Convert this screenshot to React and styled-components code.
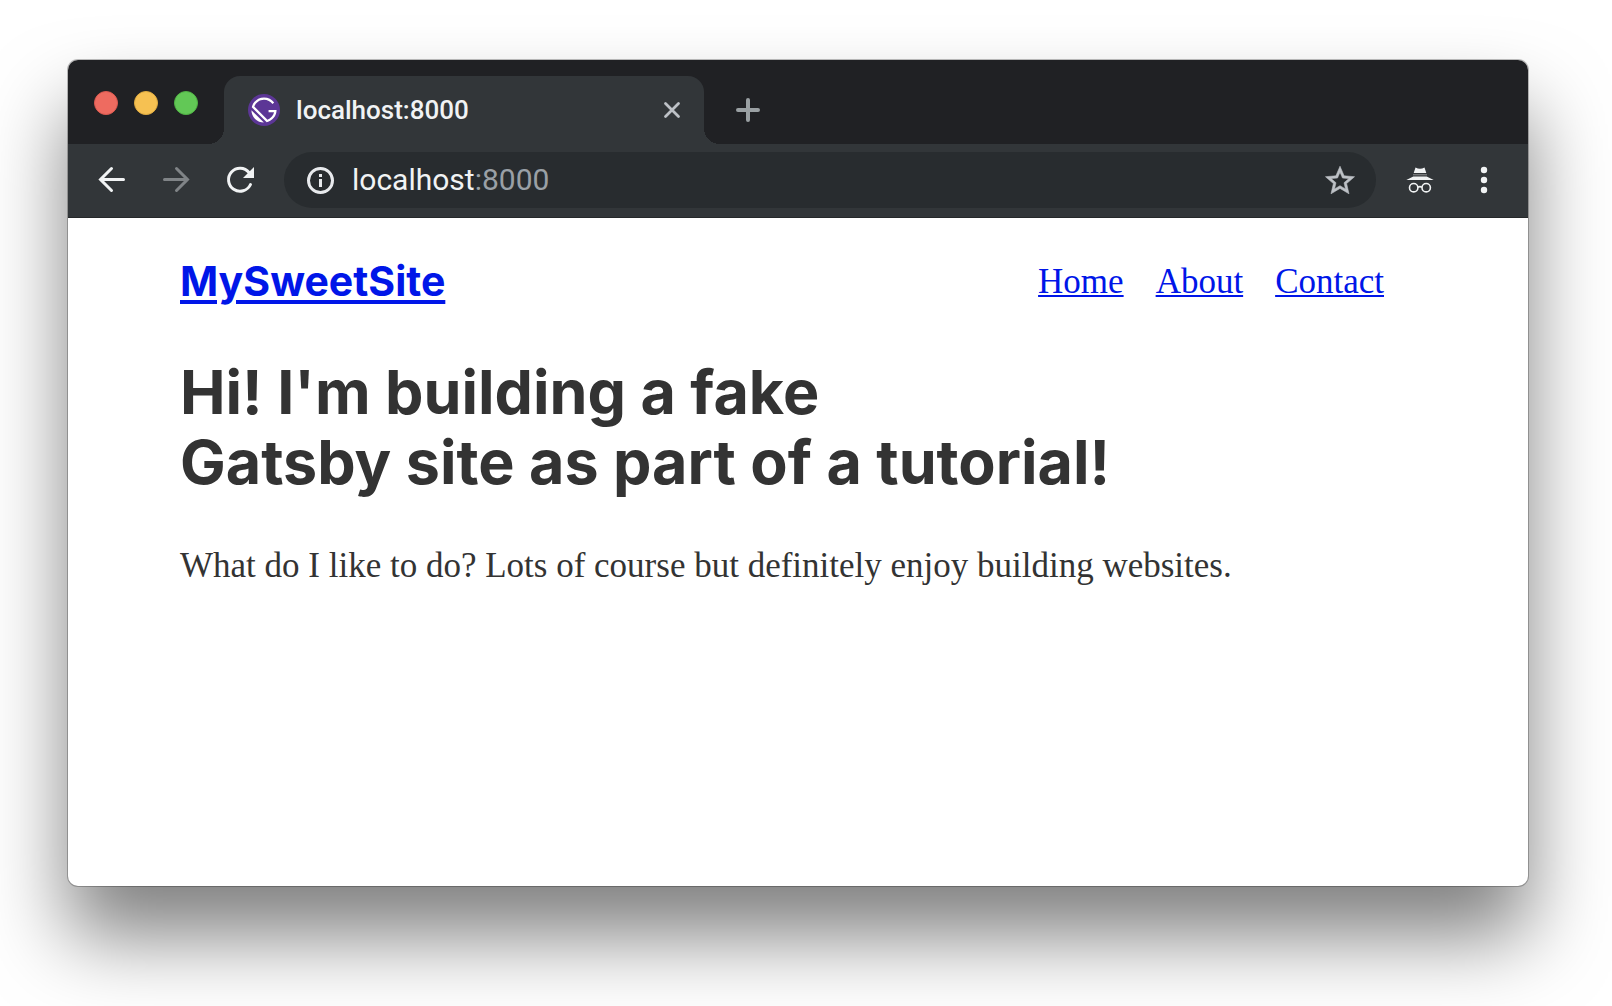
import React from "react";
import styled, { createGlobalStyle } from "styled-components";

const GlobalStyle = createGlobalStyle`
  *, *::before, *::after { box-sizing: border-box; }
  body { margin: 0; background: #fff; }
`;

const ui = `Roboto, "Open Sans", sans-serif`;
const heading = `Inter, "Liberation Sans", sans-serif`;
const serif = `Georgia, "Liberation Serif", serif`;

const Desktop = styled.div`
  display: flex;
  min-height: 100vh;
  padding: 60px 84px 120px 68px;
  overflow: hidden;
`;

const Window = styled.div`
  flex: 1;
  min-width: 0;
  display: flex;
  flex-direction: column;
  overflow: hidden;
  border-radius: 10px;
  background: #fff;
  box-shadow: 0 0 0 1px rgba(0, 0, 0, 0.25), 0 50px 80px rgba(0, 0, 0, 0.5);
`;

const TabStrip = styled.div`
  display: flex;
  align-items: flex-end;
  height: 84px;
  padding-left: 26px;
  background: #202124;
`;

const TrafficLights = styled.div`
  display: flex;
  align-self: flex-start;
  gap: 16px;
  margin: 31px 26px 0 0;
`;

const Light = styled.button`
  width: 24px;
  height: 24px;
  padding: 0;
  border: 1px solid ${(p) => p.$edge};
  border-radius: 50%;
  background: ${(p) => p.$fill};
`;

const Tab = styled.div`
  position: relative;
  display: flex;
  align-items: center;
  gap: 16px;
  width: 480px;
  height: 68px;
  padding: 0 16px 0 24px;
  border-radius: 16px 16px 0 0;
  background: #323639;

  &::before,
  &::after {
    content: "";
    position: absolute;
    bottom: 0;
    width: 16px;
    height: 16px;
  }
  &::before {
    right: 100%;
    background: radial-gradient(circle at 0 0, transparent 16px, #323639 16px);
  }
  &::after {
    left: 100%;
    background: radial-gradient(circle at 100% 0, transparent 16px, #323639 16px);
  }
`;

const TabTitle = styled.span`
  flex: 1;
  font: 500 26px/32px ${ui};
  color: #f1f3f4;
`;

const IconButton = styled.button`
  display: flex;
  flex: none;
  width: 32px;
  height: 32px;
  padding: 0;
  border: 0;
  background: none;
  color: ${(p) => p.$color || "#f1f3f4"};
`;

const NewTab = styled(IconButton)`
  align-self: center;
  margin: 16px 0 0 28px;
`;

const Toolbar = styled.div`
  display: flex;
  align-items: center;
  gap: 28px;
  height: 74px;
  padding: 0 28px 2px;
  border-bottom: 1px solid #25282a;
  background: #323639;
`;

const ButtonGroup = styled.div`
  display: flex;
  gap: 32px;
`;

const AddressBar = styled.div`
  flex: 1;
  min-width: 0;
  display: flex;
  align-items: center;
  gap: 16px;
  height: 56px;
  padding: 0 20px;
  border-radius: 28px;
  background: #282c2f;
`;

const Address = styled.label`
  flex: 1;
  display: flex;
  font: 400 30px/36px ${ui};
  color: #9aa0a6;
`;

const HostInput = styled.input`
  field-sizing: content;
  padding: 0;
  border: 0;
  outline: 0;
  background: none;
  font: inherit;
  color: #f1f3f4;
`;

const Page = styled.div`
  flex: 1;
  padding: 39px 144px 48px 112px;
  color: #333;
`;

const Header = styled.header`
  display: flex;
  align-items: center;
  justify-content: space-between;
  height: 48px;
`;

const Link = styled.a`
  color: #0016e8;
  text-decoration: underline 2px;
  text-underline-offset: 2px;
`;

const SiteName = styled(Link)`
  font: 700 41px/48px ${heading};
  text-decoration-thickness: 4px;
  text-underline-offset: 4px;
`;

const Nav = styled.nav`
  display: flex;
  gap: 32px;
  padding-top: 2px;
  font: 400 35px/48px ${serif};
`;

const Title = styled.h1`
  margin: 52px 0 0;
  font: 700 61px/70px ${heading};
`;

const Intro = styled.p`
  margin: 45px 0 0;
  font: 400 35px/48px ${serif};
`;

const Svg = ({ children, ...rest }) => (
  <svg width="32" height="32" viewBox="0 0 32 32" fill="none" stroke="currentColor" aria-hidden="true" {...rest}>
    {children}
  </svg>
);

const GatsbyIcon = () => (
  <Svg viewBox="0 0 24 24" stroke="none">
    <circle cx="12" cy="12" r="12" fill="#5c3696" />
    <path
      fill="#fff"
      d="M12 2.571c3.171 0 5.915 1.46 7.629 3.858l-1.286 1.115C16.886 5.572 14.571 4.286 12 4.286c-3.343 0-6.171 2.143-7.286 5.143l9.857 9.857c2.486-.857 4.373-3 4.973-5.572h-4.115V12h6c0 4.457-3.172 8.228-7.372 9.17L2.83 9.944C3.772 5.743 7.543 2.57 12 2.57zm-9.429 9.6l9.344 9.258c-2.4-.086-4.801-.943-6.601-2.743-1.8-1.8-2.743-4.201-2.743-6.515z"
    />
  </Svg>
);

export default function App() {
  return (
    <>
      <GlobalStyle />
      <Desktop>
        <Window>
          <TabStrip>
            <TrafficLights>
              <Light aria-label="Close window" $fill="#ee6b60" $edge="#dc5a50" />
              <Light aria-label="Minimize window" $fill="#f6c152" $edge="#e0ac40" />
              <Light aria-label="Zoom window" $fill="#62c856" $edge="#50b344" />
            </TrafficLights>
            <Tab>
              <GatsbyIcon />
              <TabTitle>localhost:8000</TabTitle>
              <IconButton aria-label="Close tab" $color="#bdc1c6">
                <Svg strokeWidth="2.8" strokeLinecap="round">
                  <path d="M9.5 9.5l13 13M22.5 9.5l-13 13" />
                </Svg>
              </IconButton>
            </Tab>
            <NewTab aria-label="New tab" $color="#9aa0a3">
              <Svg strokeWidth="4" strokeLinecap="round">
                <path d="M16 6v20M6 16h20" />
              </Svg>
            </NewTab>
          </TabStrip>

          <Toolbar>
            <ButtonGroup>
              <IconButton aria-label="Back">
                <Svg strokeWidth="3" strokeLinecap="round">
                  <path d="M27.5 15.5H5M15.5 4.5l-11 11 11 11" />
                </Svg>
              </IconButton>
              <IconButton aria-label="Forward" $color="#808487">
                <Svg strokeWidth="3" strokeLinecap="round">
                  <path d="M4.5 15.5H27M16.5 4.5l11 11-11 11" />
                </Svg>
              </IconButton>
              <IconButton aria-label="Reload">
                <Svg strokeWidth="3">
                  <path strokeLinecap="round" d="M26.5 20.5A11.5 11.5 0 1 1 25 8.5" />
                  <path fill="currentColor" stroke="none" d="M30 3v11H19z" />
                </Svg>
              </IconButton>
            </ButtonGroup>
            <AddressBar>
              <IconButton aria-label="Site information" $color="#e8eaed">
                <Svg strokeWidth="3">
                  <circle cx="16.5" cy="16.5" r="12" />
                  <path d="M16.5 15v8M16.5 10v3" />
                </Svg>
              </IconButton>
              <Address>
                <HostInput aria-label="Address" defaultValue="localhost" spellCheck={false} />
                <span>:8000</span>
              </Address>
              <IconButton aria-label="Bookmark this page" $color="#bdc1c6">
                <Svg viewBox="1 .5 22 22" fill="currentColor" strokeWidth=".4">
                  <path d="M22 9.24l-7.19-.62L12 2 9.19 8.63 2 9.24l5.46 4.73L5.82 21 12 17.27 18.18 21l-1.63-7.03L22 9.24zM12 15.4l-3.76 2.27 1-4.28-3.32-2.88 4.38-.38L12 6.1l1.71 4.04 4.38.38-3.32 2.88 1 4.28L12 15.4z" />
                </Svg>
              </IconButton>
            </AddressBar>
            <ButtonGroup>
              <IconButton aria-label="Incognito">
                <Svg>
                  <path fill="currentColor" stroke="none" d="M11.5 3.5q4.5 2.500 9 0L22.300 9H9.700zM9.300 12.500h13.400l7 3.500H2.300z" />
                  <path strokeOpacity=".5" d="M9 10.8h14" />
                  <g strokeWidth="1.6">
                    <circle cx="9.7" cy="23.7" r="4.2" />
                    <circle cx="22.2" cy="23.7" r="4.2" />
                    <path d="M13.9 23.2q2-1.2 4.1 0" />
                  </g>
                </Svg>
              </IconButton>
              <IconButton aria-label="Menu">
                <Svg fill="currentColor" stroke="none">
                  <circle cx="16" cy="6" r="3.2" />
                  <circle cx="16" cy="16" r="3.2" />
                  <circle cx="16" cy="26" r="3.2" />
                </Svg>
              </IconButton>
            </ButtonGroup>
          </Toolbar>

          <Page>
            <Header>
              <SiteName href="#">MySweetSite</SiteName>
              <Nav>
                <Link href="#home">Home</Link>
                <Link href="#about">About</Link>
                <Link href="#contact">Contact</Link>
              </Nav>
            </Header>
            <main>
              <Title>
                Hi! I'm building a fake
                <br />
                Gatsby site as part of a tutorial!
              </Title>
              <Intro>What do I like to do? Lots of course but definitely enjoy building websites.</Intro>
            </main>
          </Page>
        </Window>
      </Desktop>
    </>
  );
}
